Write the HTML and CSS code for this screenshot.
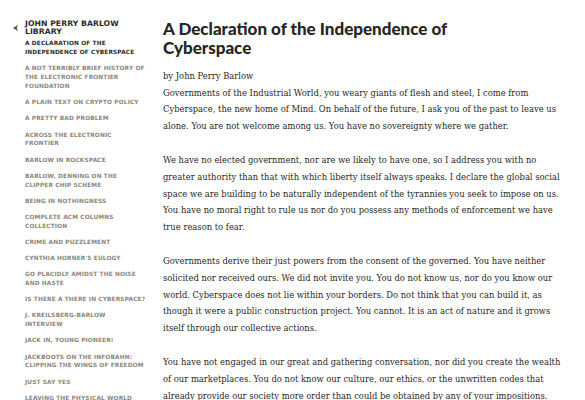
FILE: index.html
```html
<!DOCTYPE html>
<html>
<head>
<meta charset="utf-8">
<link rel="stylesheet" href="styles.css">
</head>
<body>
<div class="page">
  <nav class="sidebar">
    <div class="lib-head">
      <span class="back" aria-hidden="true"><svg width="5" height="6" viewBox="0 0 5 6"><path d="M0 3 L5 0 L3.7 3 L5 6 Z" fill="#4a4a45"/></svg></span>
      <div class="lib-title">JOHN PERRY BARLOW<br>LIBRARY</div>
    </div>
    <ul class="items">
      <li class="active">A DECLARATION OF THE<br>INDEPENDENCE OF CYBERSPACE</li>
      <li>A NOT TERRIBLY BRIEF HISTORY OF<br>THE ELECTRONIC FRONTIER<br>FOUNDATION</li>
      <li>A PLAIN TEXT ON CRYPTO POLICY</li>
      <li>A PRETTY BAD PROBLEM</li>
      <li>ACROSS THE ELECTRONIC<br>FRONTIER</li>
      <li>BARLOW IN ROCKSPACE</li>
      <li>BARLOW, DENNING ON THE<br>CLIPPER CHIP SCHEME</li>
      <li>BEING IN NOTHINGNESS</li>
      <li>COMPLETE ACM COLUMNS<br>COLLECTION</li>
      <li>CRIME AND PUZZLEMENT</li>
      <li>CYNTHIA HORNER'S EULOGY</li>
      <li>GO PLACIDLY AMIDST THE NOISE<br>AND HASTE</li>
      <li>IS THERE A THERE IN CYBERSPACE?</li>
      <li>J. KREILSBERG-BARLOW<br>INTERVIEW</li>
      <li>JACK IN, YOUNG PIONEER!</li>
      <li>JACKBOOTS ON THE INFOBAHN:<br>CLIPPING THE WINGS OF FREEDOM</li>
      <li>JUST SAY YES</li>
      <li>LEAVING THE PHYSICAL WORLD</li>
    </ul>
  </nav>
  <main class="content">
    <h1 class="title">A Declaration of the Independence of Cyberspace</h1>
    <p class="byline">by John Perry Barlow</p>
    <p>Governments of the Industrial World, you weary giants of flesh and steel, I come from Cyberspace, the new home of Mind. On behalf of the future, I ask you of the past to leave us alone. You are not welcome among us. You have no sovereignty where we gather.</p>
    <p>We have no elected government, nor are we likely to have one, so I address you with no greater authority than that with which liberty itself always speaks. I declare the global social space we are building to be naturally independent of the tyrannies you seek to impose on us. You have no moral right to rule us nor do you possess any methods of enforcement we have true reason to fear.</p>
    <p>Governments derive their just powers from the consent of the governed. You have neither solicited nor received ours. We did not invite you. You do not know us, nor do you know our world. Cyberspace does not lie within your borders. Do not think that you can build it, as though it were a public construction project. You cannot. It is an act of nature and it grows itself through our collective actions.</p>
    <p>You have not engaged in our great and gathering conversation, nor did you create the wealth of our marketplaces. You do not know our culture, our ethics, or the unwritten codes that already provide our society more order than could be obtained by any of your impositions.</p>
  </main>
</div>
</body>
</html>
```

FILE: styles.css
```css
html, body {
  margin: 0;
  padding: 0;
  background: #ffffff;
  overflow: hidden;
}
.page {
  display: flex;
  align-items: flex-start;
  width: 585px;
  height: 400px;
  overflow: hidden;
}
.sidebar {
  width: 125px;
  flex: none;
  padding: 19.5px 0 0 25px;
  font-family: "DejaVu Sans", sans-serif;
  font-weight: bold;
  white-space: nowrap;
}
.lib-head {
  position: relative;
}
.back {
  position: absolute;
  left: -12px;
  top: 5px;
  line-height: 0;
}
.lib-title {
  font-size: 7.7px;
  line-height: 8.4px;
  letter-spacing: 0.05px;
  color: #2b2b28;
}
.items {
  list-style: none;
  margin: 2.5px 0 0 0;
  padding: 0;
  display: flex;
  flex-direction: column;
  gap: 7.4px;
}
.items li {
  font-size: 5.8px;
  line-height: 8.8px;
  letter-spacing: 0.15px;
  color: #8a877d;
}
.items li.active {
  color: #2b2b28;
  margin-bottom: 0.6px;
}
.content {
  flex: none;
  width: 400px;
  margin-left: 13px;
  padding-top: 19px;
  font-family: "DejaVu Serif", serif;
  color: #1f1f1d;
}
.title {
  max-width: 300px;
  font-family: "Lato", "DejaVu Sans", sans-serif;
  font-weight: 900;
  font-size: 17px;
  line-height: 19px;
  margin: 0 0 11px 0;
  color: #262623;
}
.content p {
  font-size: 8.4px;
  line-height: 16.6px;
  margin: 0 0 18px 0;
}
.content p.byline {
  margin: 0;
}
```
